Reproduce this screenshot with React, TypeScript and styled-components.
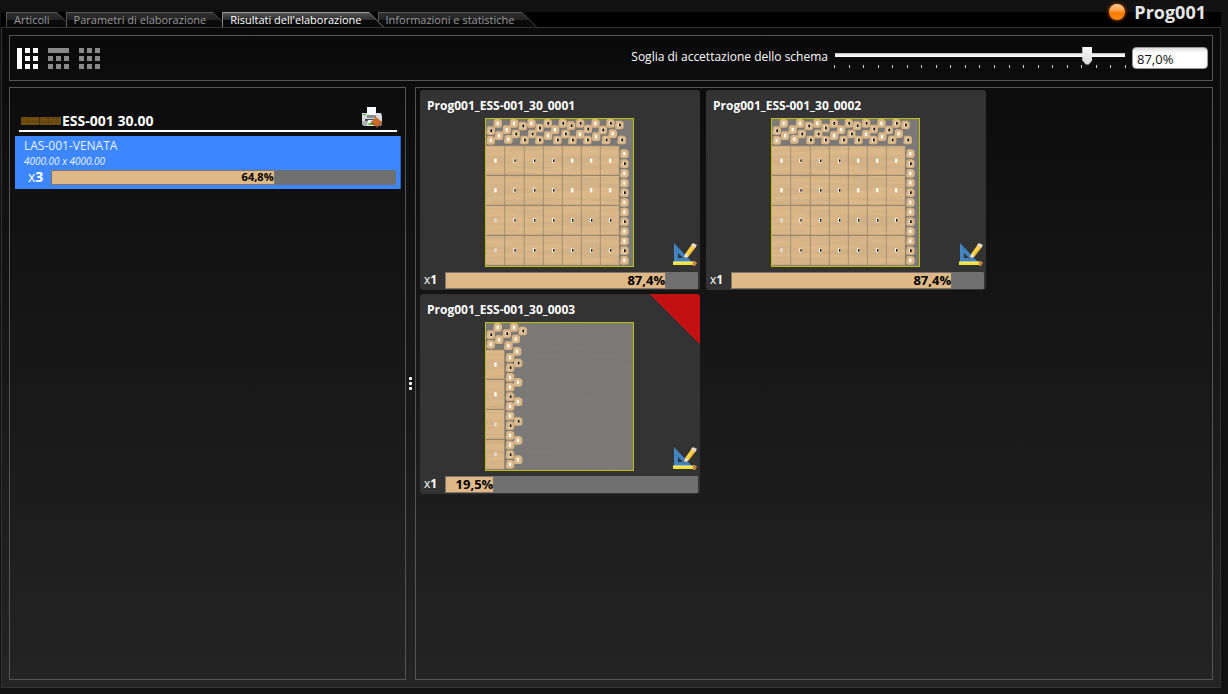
import React, { useState } from "react";
import styled, { createGlobalStyle } from "styled-components";

const GlobalStyle = createGlobalStyle`
  *, *::before, *::after { box-sizing: border-box; }
  body {
    margin: 0;
    background: #111;
    color: #fff;
    font: 12px/16px "Open Sans", "Noto Sans", sans-serif;
  }
  button, input { font: inherit; color: inherit; }
  h1, h2, h3, p { margin: 0; }
`;

const Page = styled.div`
  min-height: 100vh;
  display: flex;
  flex-direction: column;
  padding: 0 7px 6px 1px;
`;

const Header = styled.header`
  height: 27px;
  display: flex;
  align-items: flex-end;
  justify-content: space-between;
  padding: 0 15px 0 5px;
  background: linear-gradient(#111 12px, #000 12px);
`;

const TabList = styled.nav`
  display: flex;
  isolation: isolate;
`;

const Tab = styled.button<{ $active: boolean }>`
  position: relative;
  z-index: ${(p) => (p.$active ? 1 : 0)};
  display: flex;
  height: 15px;
  padding: 0;
  margin-right: -7px;
  border: 0;
  background: none;
  color: ${(p) => (p.$active ? "#fff" : "#999")};
  font-size: 11px;
  cursor: pointer;
`;

const TabLabel = styled.span<{ $active: boolean }>`
  height: 15px;
  padding: 0 7px;
  border-top: 1px solid ${(p) => (p.$active ? "#999" : "#555")};
  border-left: 1px solid ${(p) => (p.$active ? "#888" : "#555")};
  background: ${(p) =>
    p.$active
      ? "linear-gradient(#555, #2c2c2c 50%, #080808 51%, #0a0a0a)"
      : "linear-gradient(#303030, #222 50%, #0b0b0b 51%, #0a0a0a)"};
  line-height: 14px;
  white-space: nowrap;
`;

const Title = styled.div`
  height: 27px;
  display: flex;
  align-items: flex-start;
  gap: 4px;
  h1 { font-size: 18px; line-height: 25px; font-weight: 700; color: #e6e6e6; }
`;

const Content = styled.main`
  flex: 1;
  display: flex;
  flex-direction: column;
  gap: 6px;
  padding: 7px;
  border: 1px solid #333;
  background: linear-gradient(#0a0a0a, #242424);
`;

const Toolbar = styled.section`
  height: 46px;
  display: flex;
  align-items: center;
  justify-content: space-between;
  padding: 0 4px 0 7px;
  border: 1px solid #555;
`;

const ViewModes = styled.div`
  display: flex;
  gap: 9px;
`;

const ViewButton = styled.button<{ $active: boolean }>`
  display: block;
  padding: 0;
  border: 0;
  background: none;
  color: ${(p) => (p.$active ? "#fff" : "#8a8a8a")};
  cursor: pointer;
  svg { display: block; }
`;

const Threshold = styled.div`
  display: flex;
  align-items: center;
  gap: 2px;
  padding-bottom: 2px;
`;

const SliderBox = styled.div`
  width: 300px;
`;

const Slider = styled.input`
  appearance: none;
  display: block;
  width: 300px;
  height: 19px;
  margin: 0;
  background: linear-gradient(#bbb, #f4f4f4 50%, #fff) 5px 7px / 290px 4px no-repeat;
  &::-webkit-slider-thumb {
    appearance: none;
    width: 10px;
    height: 18px;
    background: linear-gradient(#fafafa, #d8d8d8);
    clip-path: polygon(0 0, 100% 0, 100% 76%, 65% 100%, 35% 100%, 0 76%);
  }
`;

const Ticks = styled.div`
  display: flex;
  justify-content: space-between;
  width: 292px;
  margin-left: 4px;
  span { width: 1px; height: 3px; background: #ccc; }
`;

const ThresholdValue = styled.input`
  width: 76px;
  height: 22px;
  margin-top: 2px;
  padding: 2px 4px 0;
  border: 1px solid #999;
  border-radius: 4px;
  background: linear-gradient(#ddd, #fff 5px);
  color: #111;
  font-size: 13px;
`;

const Panels = styled.div`
  flex: 1;
  display: flex;
`;

const MaterialPanel = styled.section`
  width: 397px;
  padding: 16px 4px 4px 5px;
  border: 1px solid #555;
`;

const Splitter = styled.div`
  width: 9px;
  display: flex;
  flex-direction: column;
  align-items: center;
  justify-content: center;
  gap: 2px;
  span { width: 3px; height: 3px; border-radius: 1px; background: #fff; }
`;

const ResultsPanel = styled.section`
  flex: 1;
  display: flex;
  flex-wrap: wrap;
  align-content: flex-start;
  gap: 4px 6px;
  padding: 2px 4px;
  border: 1px solid #555;
`;

const MaterialHeader = styled.div`
  display: flex;
  align-items: center;
  gap: 1px;
  height: 28px;
  margin: 0 4px;
  padding: 0 14px 0 2px;
  border-bottom: 2px solid #fff;
  h2 { flex: 1; padding-top: 8px; font-size: 14px; line-height: 16px; }
`;

const Swatch = styled.svg`
  margin-top: 8px;
`;

const PrintButton = styled.button`
  padding: 0;
  border: 0;
  background: none;
  svg { display: block; }
`;

const SheetItem = styled.article`
  height: 53px;
  margin-top: 4px;
  padding: 2px 3px 0 9px;
  background: #3c86ff;
  border-right: 1px solid #2a61bd;
  color: #e9f1ff;
  small { display: block; font-size: 10px; line-height: 14px; font-style: italic; }
`;

const CountRow = styled.div<{ $inset: number }>`
  display: flex;
  align-items: center;
  gap: 6px;
  padding: 0 1px 0 ${(p) => p.$inset}px;
`;

const Count = styled.span<{ $size: number; $width: number }>`
  width: ${(p) => p.$width}px;
  font-size: ${(p) => p.$size}px;
  line-height: 18px;
  color: #fff;
  white-space: nowrap;
`;

const Bar = styled.div<{ $height: number }>`
  flex: 1;
  height: ${(p) => p.$height}px;
  background: #707070;
  border-radius: 1px;
`;

const Fill = styled.div<{ $size: number }>`
  height: 100%;
  display: flex;
  align-items: center;
  justify-content: flex-end;
  border: 1px solid #80746a;
  background: #deb887;
  color: #000;
  font-size: ${(p) => p.$size}px;
  line-height: 14px;
  font-weight: 700;
`;

const Card = styled.article<{ $flagged: boolean }>`
  width: 280px;
  height: 200px;
  display: flex;
  flex-direction: column;
  padding: 0 1px 1px 4px;
  border-radius: 3px;
  background: ${(p) =>
    p.$flagged ? "linear-gradient(45deg, transparent 50%, #c31111 50%) right top / 50px 50px no-repeat, " : ""}#333;
  h3 { height: 28px; padding: 8px 3px 0; font-size: 12px; line-height: 16px; }
`;

const CardBody = styled.div`
  flex: 1;
  display: grid;
  grid-template-columns: 61px 149px 1fr;
`;

const Preview = styled.svg`
  grid-column: 2;
  display: block;
`;

const EditButton = styled.button`
  justify-self: end;
  align-self: end;
  margin: 0 2px 5px 0;
  padding: 0;
  border: 0;
  background: none;
  svg { display: block; }
`;

type Point = [number, number];

const TOP_A: Point[] = [
  [53, 34], [102, 34], [154, 34], [203, 34], [248, 34], [300, 34], [346, 34], [391, 34],
  [418, 39], [128, 42], [273, 41], [32, 56], [80, 53], [178, 48], [225, 53], [323, 51],
  [368, 54], [57, 71], [107, 66], [156, 66], [204, 71], [256, 66], [300, 67], [348, 74],
  [398, 65], [32, 85], [85, 82], [133, 84], [178, 84], [232, 84], [277, 84], [322, 84],
  [378, 84], [425, 84],
];
const TOP_B: Point[] = [
  [53, 34], [102, 34], [128, 45], [32, 56], [80, 53], [57, 71], [107, 69], [32, 85],
  [85, 89], [111, 106], [114, 141], [114, 199], [114, 257], [114, 316], [114, 373], [114, 431],
];
const DARK_A = new Set([3, 4, 5, 7, 8, 9, 10, 11, 13, 15, 16, 18, 19, 21, 27, 28, 29, 30, 31, 32, 33]);
const DARK_B = new Set([2, 3, 4, 10, 13]);
const SIDE_Y = [125, 155, 184, 213, 242, 271, 300, 329, 358, 387, 416, 445];
const COLUMNS = [17, 74, 133, 190, 247, 304, 361, 418];
const ROWS = [101, 190, 280, 370, 460];

function Piece({ x, y, dark }: { x: number; y: number; dark: boolean }) {
  return (
    <g transform={`translate(${x} ${y})`}>
      <path d="M-8-13H5L9-11L13-7V7L10 12L5 13H-7L-12 11L-13 5L-11-4L-12-8Z" fill="#d9b586" />
      <path d="M-4-8H4L7-4V5L3 9H-4L-7 5V-5Z" fill="#dfbe91" />
      <rect x="-3" y="-5" width="6" height="10" fill="#fff" />
      {dark && <rect x="-1" y="-4" width="5" height="8" fill="#000" />}
    </g>
  );
}

function Layout({ id, full }: { id: string; full: boolean }) {
  const cols = full ? 7 : 1;
  const pieces = full ? TOP_A : TOP_B;
  const dark = full ? DARK_A : DARK_B;
  const sideX = full ? 433 : 90;
  return (
    <Preview width="149" height="149" viewBox="15 18 447 447" role="img" aria-label="Schema di taglio">
      <filter id={`grain-${id}`} x="0" y="0" width="100%" height="100%">
        <feTurbulence type="fractalNoise" baseFrequency="0.005 0.07" numOctaves="2" seed="4" />
        <feColorMatrix values="0 0 0 0 0.2  0 0 0 0 0.18  0 0 0 0 0.16  4 0 0 0 -1.6" />
      </filter>
      <rect x="15" y="18" width="447" height="447" fill="#7b7a78" />
      <rect x="15" y="18" width="447" height="447" filter={`url(#grain-${id})`} opacity="0.26" />
      <rect x="17" y="101" width={COLUMNS[cols] - 17} height="359" fill="#dcb889" />
      <rect x="17" y="101" width={COLUMNS[cols] - 17} height="359" filter={`url(#grain-${id})`} opacity="0.1" />
      <g stroke="#8b7d69" strokeWidth="3">
        {ROWS.map((y) => <path key={y} d={`M17 ${y}H${COLUMNS[cols]}`} />)}
        {COLUMNS.slice(1, cols + 1).map((x) => <path key={x} d={`M${x} 101V460`} strokeWidth="2" />)}
      </g>
      {ROWS.slice(0, 4).map((y) =>
        COLUMNS.slice(0, cols).map((x, c) => (
          <g key={`${x}-${y}`}>
            <rect x={x + 26} y={y + 39} width="7" height="12" fill={c === 0 && y > 200 ? "#ddd" : "#fff"} />
            {c > 0 && (c < 4 || y > 200) && <rect x={x + 29} y={y + 41} width="4" height="8" fill="#111" />}
          </g>
        ))
      )}
      {pieces.map(([x, y], i) => <Piece key={i} x={x} y={y} dark={dark.has(i)} />)}
      {SIDE_Y.map((y, i) => <Piece key={y} x={sideX} y={y} dark={i % 3 === 1} />)}
      <rect x="16.5" y="19.5" width="444" height="444" fill="none" stroke="#bfbf10" strokeWidth="3" />
    </Preview>
  );
}

function TabSlope({ active }: { active: boolean }) {
  const id = active ? "slope-on" : "slope-off";
  return (
    <svg width="16" height="15" aria-hidden="true">
      <linearGradient id={id} x2="0" y2="1">
        <stop offset="0" stopColor={active ? "#555" : "#303030"} />
        <stop offset=".5" stopColor={active ? "#2c2c2c" : "#222"} />
        <stop offset=".52" stopColor="#0a0a0a" />
      </linearGradient>
      <path d="M0 0L15 15H0Z" fill={`url(#${id})`} />
      <path d="M0 .5L15 15.5" stroke={active ? "#777" : "#444"} fill="none" />
    </svg>
  );
}

const VIEW_RECTS: number[][][] = [
  [[0, 0, 5, 21], ...[8, 16].flatMap((x) => [0, 8, 16].map((y) => [x, y, 5, 5]))],
  [[0, 0, 21, 5], ...[0, 8, 16].flatMap((x) => [8, 16].map((y) => [x, y, 5, 5]))],
  [0, 8, 16].flatMap((x) => [0, 8, 16].map((y) => [x, y, 5, 5])),
];

function Led() {
  return (
    <svg width="26" height="24" viewBox="0 0 26 24" aria-hidden="true">
      <radialGradient id="glow">
        <stop offset=".5" stopColor="#e85a00" stopOpacity=".8" />
        <stop offset="1" stopColor="#401500" stopOpacity="0" />
      </radialGradient>
      <linearGradient id="led" x2="0" y2="1">
        <stop offset="0" stopColor="#ffd09a" />
        <stop offset=".45" stopColor="#ff9a3c" />
        <stop offset=".55" stopColor="#f57900" />
        <stop offset="1" stopColor="#ff8c10" />
      </linearGradient>
      <circle cx="13" cy="12" r="12" fill="url(#glow)" />
      <circle cx="13" cy="12" r="8" fill="url(#led)" />
    </svg>
  );
}

function BarkSwatch() {
  return (
    <Swatch width="40" height="8" aria-hidden="true">
      <rect width="40" height="8" fill="#6b4c0e" />
      <path d="M0 6.500H18M20 2.500H40M5 2.500H16M22 6.500H38" stroke="#75551a" />
      <path d="M0 4.500H17M20 5.500H32M24 1.500H39" stroke="#61450d" />
      <path d="M6.500 0V8M27.500 0V8M35.500 0V8" stroke="#604510" />
      <path d="M18.500 0V8" stroke="#473206" />
    </Swatch>
  );
}

function PrinterIcon() {
  return (
    <svg width="22" height="21" viewBox="0 0 22 21" aria-hidden="true">
      <path d="M1 6H20L21 9V17L19 19H3L1 17Z" fill="#d9dade" />
      <path d="M1 14H21V17L19 19H3L1 17Z" fill="#adb0b6" />
      <path d="M6 0H15V9H6Z" fill="#f6f8fc" />
      <path d="M6 8H15V11H6Z" fill="#8b8d92" />
      <path d="M4 12H17V14H4Z" fill="#3f4c57" />
      <path d="M7 13H14L16 19H6Z" fill="#e5eef2" />
      <path d="M8 16H13V18H7Z" fill="#59b52f" />
      <path d="M2 7H5V8H2Z" fill="#20d020" />
      <path d="M10 15L15 10L21 15L16 20Z" fill="#c86a28" />
      <path d="M10 15L16 20L21 15V16L16 21L10 16Z" fill="#793c14" />
    </svg>
  );
}

function DesignIcon() {
  return (
    <svg width="24" height="24" viewBox="0 0 24 24" aria-hidden="true">
      <path fillRule="evenodd" d="M1 1L19 20H1ZM5 11V16H10Z" fill="#3f82bd" />
      <path d="M2 4V19M2 19H17" stroke="#5b97c9" strokeDasharray="1 2" />
      <path d="M12 12L19 2L23 5L16 14L11 17Z" fill="#f5bd30" />
      <path d="M13 12L20 3L21 4L14 13Z" fill="#ffe36c" />
      <path d="M18 3L20 1L24 3L22 6Z" fill="#e8d6c8" />
      <path d="M11 17L12 12L16 14Z" fill="#f2e5d2" />
      <path d="M10 18L12 15L13 16Z" fill="#555" />
      <path d="M0 20H21V23H0Z" fill="#f4df35" />
      <path d="M0 20H21" stroke="#fff68c" />
      <path d="M20 19H22L24 21L22 24H20Z" fill="#c58242" />
    </svg>
  );
}

function Progress({ value, height, size }: { value: number; height: number; size: number }) {
  return (
    <Bar $height={height} role="progressbar" aria-valuenow={value}>
      <Fill $size={size} style={{ width: `${value}%` }}>{value.toFixed(1).replace(".", ",")}%</Fill>
    </Bar>
  );
}

const TABS = ["Articoli", "Parametri di elaborazione", "Risultati dell'elaborazione", "Informazioni e statistiche"];
const VIEWS = ["Elenco laterale", "Elenco in alto", "Griglia"];
const RESULTS = [
  { name: "Prog001_ESS-001_30_0001", value: 87.4 },
  { name: "Prog001_ESS-001_30_0002", value: 87.4 },
  { name: "Prog001_ESS-001_30_0003", value: 19.5 },
];

export default function App() {
  const [tab, setTab] = useState(2);
  const [view, setView] = useState(0);
  const [threshold, setThreshold] = useState(87);
  return (
    <Page>
      <GlobalStyle />
      <Header>
        <TabList>
          {TABS.map((label, i) => (
            <Tab key={label} $active={i === tab} onClick={() => setTab(i)}>
              <TabLabel $active={i === tab}>{label}</TabLabel>
              <TabSlope active={i === tab} />
            </Tab>
          ))}
        </TabList>
        <Title><Led /><h1>Prog001</h1></Title>
      </Header>
      <Content>
        <Toolbar>
          <ViewModes>
            {VIEW_RECTS.map((rects, i) => (
              <ViewButton key={i} $active={i === view} aria-label={VIEWS[i]} onClick={() => setView(i)}>
                <svg width="22" height="21" fill="currentColor">
                  {rects.map(([x, y, w, h]) => <rect key={`${x}-${y}`} x={x} y={y} width={w} height={h} />)}
                </svg>
              </ViewButton>
            ))}
          </ViewModes>
          <Threshold>
            <label htmlFor="threshold">Soglia di accettazione dello schema</label>
            <SliderBox>
              <Slider id="threshold" type="range" min="0" max="100" value={threshold}
                onChange={(e) => setThreshold(Number(e.target.value))} />
              <Ticks>{Array.from({ length: 21 }, (_, i) => <span key={i} />)}</Ticks>
            </SliderBox>
            <ThresholdValue aria-label="Soglia" readOnly value={`${threshold.toFixed(1).replace(".", ",")}%`} />
          </Threshold>
        </Toolbar>
        <Panels>
          <MaterialPanel>
            <MaterialHeader>
              <BarkSwatch />
              <h2>ESS-001 30.00</h2>
              <PrintButton aria-label="Stampa"><PrinterIcon /></PrintButton>
            </MaterialHeader>
            <SheetItem>
              <p>LAS-001-VENATA</p>
              <small>4000.00 x 4000.00</small>
              <CountRow $inset={4}>
                <Count $size={14} $width={17}>x<b>3</b></Count>
                <Progress value={64.8} height={15} size={11} />
              </CountRow>
            </SheetItem>
          </MaterialPanel>
          <Splitter><span /><span /><span /></Splitter>
          <ResultsPanel>
            {RESULTS.map((r, i) => (
              <Card key={r.name} $flagged={r.value < 50}>
                <h3>{r.name}</h3>
                <CardBody>
                  <Layout id={`${i}`} full={r.value > 50} />
                  <EditButton aria-label="Modifica"><DesignIcon /></EditButton>
                </CardBody>
                <CountRow $inset={0}>
                  <Count $size={12} $width={15}>x<b>1</b></Count>
                  <Progress value={r.value} height={17} size={13} />
                </CountRow>
              </Card>
            ))}
          </ResultsPanel>
        </Panels>
      </Content>
    </Page>
  );
}
